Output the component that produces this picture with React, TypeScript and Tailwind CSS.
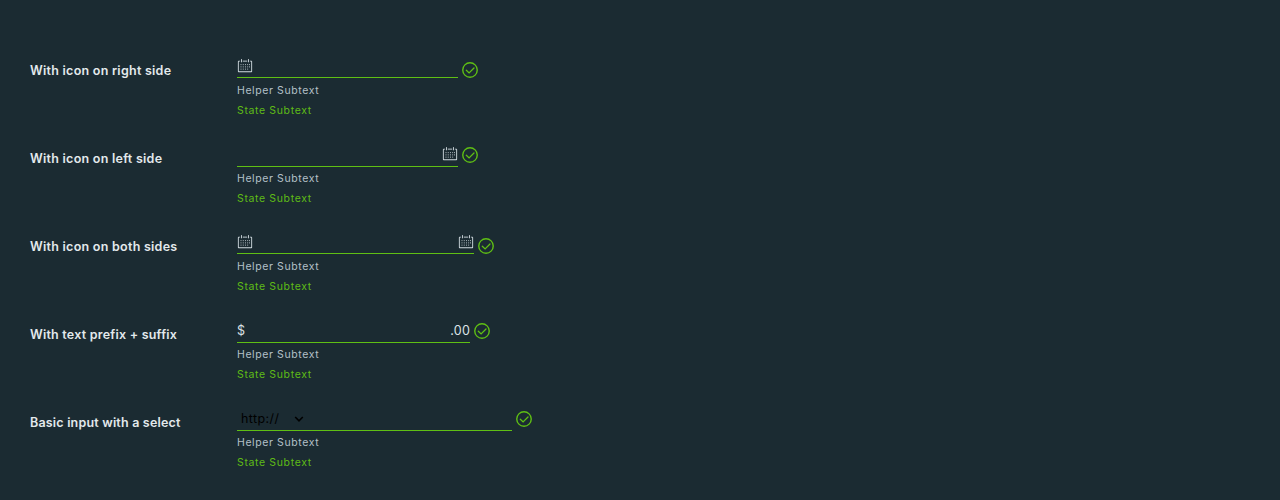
import React from "react";

function CalendarIcon({ className = "" }: { className?: string }) {
  return (
    <svg viewBox="0 0 36 36" className={`size-4 shrink-0 fill-[#d3dde2] ${className}`} aria-hidden="true">
      <path d="M32.25,6H29V8h3V30H4V8H7V6H3.75A1.78,1.78,0,0,0,2,7.81V30.19A1.78,1.78,0,0,0,3.75,32h28.5A1.78,1.78,0,0,0,34,30.19V7.81A1.78,1.78,0,0,0,32.25,6Z" />
      {[14, 19, 24].map((y) =>
        [8, 13, 18, 23].map((x) => <rect key={`${x}-${y}`} x={x} y={y} width="2" height="2" />),
      )}
      {[14, 19].map((y) => (
        <rect key={y} x="27" y={y} width="2" height="2" />
      ))}
      <path d="M10,10a1,1,0,0,0,1-1V3A1,1,0,0,0,9,3V9A1,1,0,0,0,10,10Z" />
      <path d="M26,10a1,1,0,0,0,1-1V3a1,1,0,0,0-2,0V9A1,1,0,0,0,26,10Z" />
      <rect x="13" y="6" width="10" height="2" />
    </svg>
  );
}

function CheckIcon({ className = "" }: { className?: string }) {
  return (
    <svg viewBox="0 0 16 16" className={`ml-1 size-4 shrink-0 ${className}`} fill="none" stroke="#5fbf14" aria-hidden="true">
      <circle cx="8" cy="8" r="7.25" strokeWidth="1.4" />
      <path d="M4.3 8.2l2.8 2.7 4.9-4.9" strokeWidth="1.3" strokeLinecap="round" />
    </svg>
  );
}

type RowProps = {
  label: string;
  labelClass: string;
  fieldClass: string;
  checkClass: string;
  children: React.ReactNode;
};

function Row({ label, labelClass, fieldClass, checkClass, children }: RowProps) {
  return (
    <div className="flex h-[88px]">
      <label className={`w-[207px] shrink-0 pt-[11px] text-[12.5px] leading-6 font-semibold whitespace-nowrap text-[#e3e9ec] ${labelClass}`}>
        {label}
      </label>
      <div>
        <div className="flex h-[33px]">
          <div className={`flex border-b border-[#5fbf14] text-[13px] leading-6 text-[#dbe3e7] ${fieldClass}`}>{children}</div>
          <CheckIcon className={checkClass} />
        </div>
        <div className="text-[10.5px] leading-5 tracking-[0.6px] text-[#b3c0c8]">Helper Subtext</div>
        <div className="text-[10.5px] leading-5 tracking-[0.64px] text-[#5fbc16]">State Subtext</div>
      </div>
    </div>
  );
}

export default function App() {
  return (
    <div className="h-[500px] overflow-hidden bg-[#1b2b32] pt-12 pl-[30px] font-['Inter','Noto_Sans',sans-serif]">
      <Row label="With icon on right side" labelClass="tracking-[0.26px]" fieldClass="h-[30px] w-[221px]" checkClass="mt-[14px]">
        <CalendarIcon className="mt-[10px]" />
      </Row>
      <Row label="With icon on left side" labelClass="tracking-[0.26px]" fieldClass="h-[31px] w-[221px] justify-end" checkClass="mt-[11px]">
        <CalendarIcon className="mt-[10px]" />
      </Row>
      <Row label="With icon on both sides" labelClass="tracking-[0.26px]" fieldClass="h-[30px] w-[237px] justify-between" checkClass="mt-[14px]">
        <CalendarIcon className="mt-[10px]" />
        <CalendarIcon className="mt-[10px]" />
      </Row>
      <Row label="With text prefix + suffix" labelClass="tracking-[0.22px]" fieldClass="h-[31px] w-[233px] justify-between pt-[7px]" checkClass="mt-[11px]">
        <span className="text-[12.5px]">$</span>
        <span className="text-[12.5px] tracking-[0.2px]">.00</span>
      </Row>
      <Row label="Basic input with a select" labelClass="tracking-[0.19px]" fieldClass="h-[31px] w-[275px] pt-[7px]" checkClass="mt-[11px]">
        <span className="ml-1 w-[53px] text-[12.5px] tracking-[0.4px] text-black">http://</span>
        <svg viewBox="0 0 10 8" className="mt-[8px] h-2 w-2.5" fill="none" stroke="#000" strokeWidth="1.6" aria-hidden="true">
          <path d="M1.200 2l3.800 3.800L8.800 2" />
        </svg>
      </Row>
    </div>
  );
}
